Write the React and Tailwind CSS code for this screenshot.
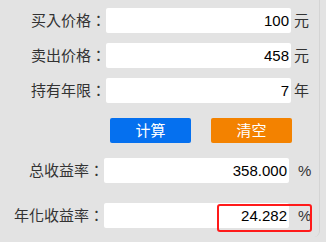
import React from "react";

const inputs = [
  { label: "买入价格：", value: "100", unit: "元" },
  { label: "卖出价格：", value: "458", unit: "元" },
  { label: "持有年限：", value: "7", unit: "年" },
];

const results = [
  { label: "总收益率：", value: "358.000", highlight: false },
  { label: "年化收益率：", value: "24.282", highlight: true },
];

const font = { fontFamily: '"Liberation Sans", "Noto Sans CJK SC", sans-serif' };
const labelFont = { fontFamily: '"Liberation Sans", "Noto Sans CJK TC", sans-serif' };

function InputRow({ label, value, unit }) {
  return (
    <div className="flex items-center h-[25px]">
      <span className="w-[106px] text-right text-[15px] leading-none text-[#333]" style={labelFont}>
        {label}
      </span>
      <div className="w-[185px] h-[25px] bg-white rounded-[2px] flex items-center justify-end pr-[2px] text-[15px] leading-none text-black">
        {value}
      </div>
      <span className="ml-[3px] text-[15px] leading-none text-[#333]">{unit}</span>
    </div>
  );
}

function ResultRow({ label, value, highlight }) {
  return (
    <div className="relative flex items-center h-[25px]">
      <span className="w-[104px] text-right text-[15px] leading-none text-[#333]" style={labelFont}>
        {label}
      </span>
      <div className="w-[185px] h-[25px] bg-white rounded-[2px] flex items-center justify-end pr-[2px] text-[15px] leading-none text-black">
        {value}
      </div>
      <span className="ml-[9px] text-[15px] leading-none text-[#333]">%</span>
      {highlight && (
        <div className="absolute left-[217px] top-[1px] w-[95px] h-[28px] border-[2px] border-[#ff1a1a] rounded-[3px]" />
      )}
    </div>
  );
}

export default function App() {
  return (
    <div className="w-[326px] h-[242px] bg-[#e3e3e3] overflow-hidden" style={font}>
      <div className="w-[320px] h-[237px] bg-[#e3e3e3] border-r border-[#d4d4d4] rounded-br-[6px] pt-[8px] flex flex-col">
        <div className="flex flex-col gap-[10px]">
          {inputs.map((row, i) => (
            <InputRow key={i} {...row} />
          ))}
        </div>
        <div className="flex gap-[20px] pl-[110px] mt-[15px]">
          <button className="w-[81px] h-[25px] bg-[#0570ef] rounded-[2px] text-white text-[15px] leading-none">
            计算
          </button>
          <button className="w-[81px] h-[25px] bg-[#f38200] rounded-[2px] text-white text-[15px] leading-none">
            清空
          </button>
        </div>
        <div className="flex flex-col gap-[20px] mt-[15px]">
          {results.map((row, i) => (
            <ResultRow key={i} {...row} />
          ))}
        </div>
      </div>
    </div>
  );
}
